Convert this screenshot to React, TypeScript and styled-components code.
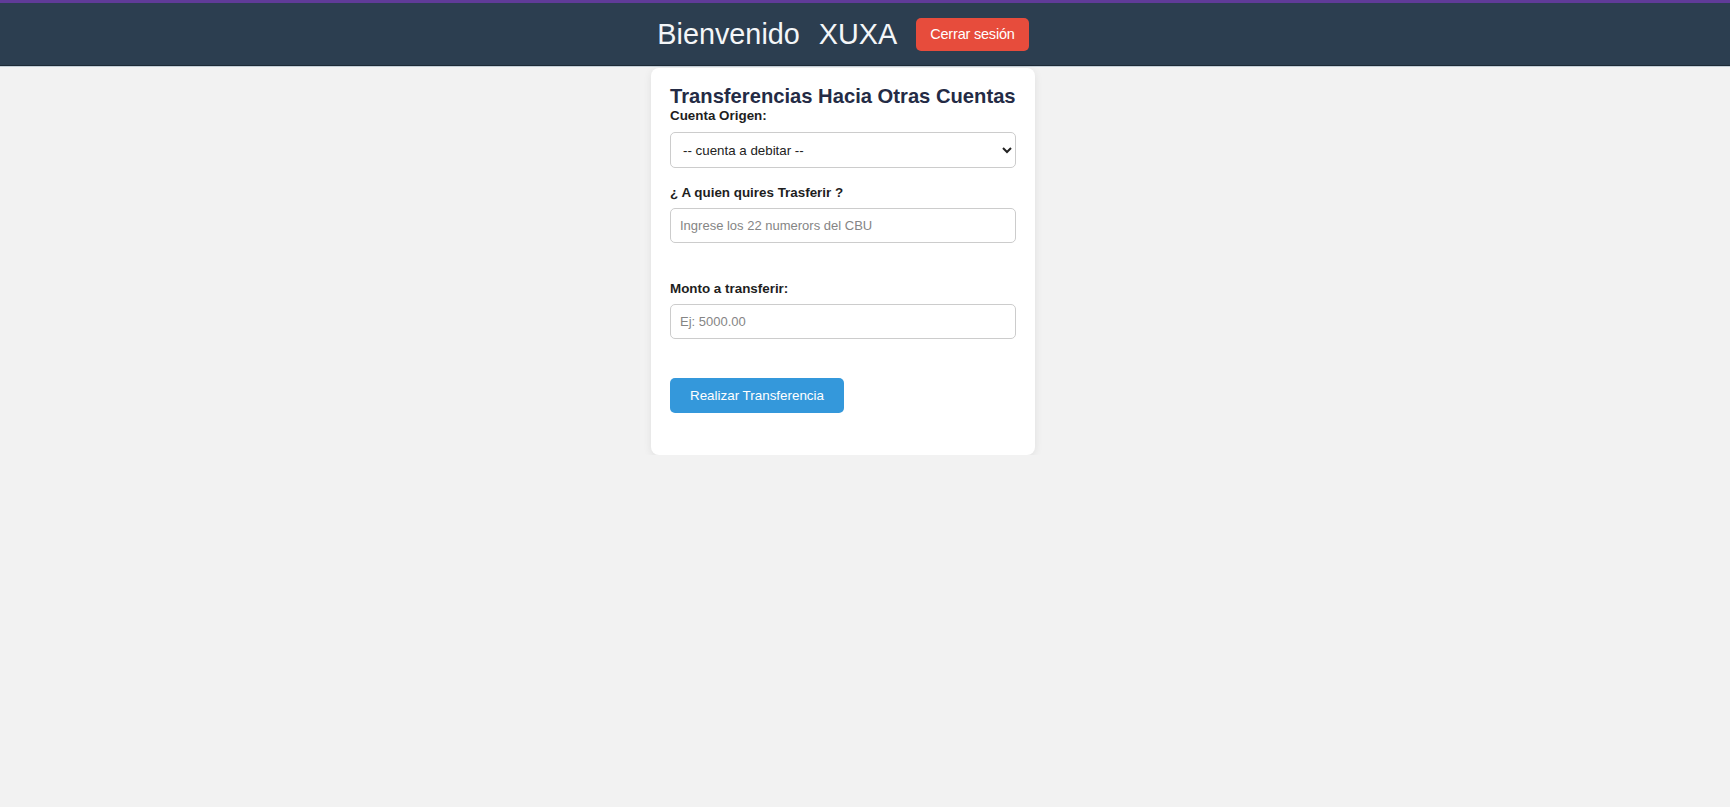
import React from "react";
import styled, { createGlobalStyle } from "styled-components";

const GlobalStyle = createGlobalStyle`
  html, body {
    margin: 0;
    padding: 0;
    background: #f2f2f2;
    font-family: "Liberation Sans", Arial, sans-serif;
  }
  * { box-sizing: border-box; }
`;

const Header = styled.header`
  height: 65px;
  border-top: 3px solid #603b98;
  background: #2c3e50;
  box-shadow: 0 1px 0 #1d2a36, 0 2px 0 #c3ced7;
  display: flex;
  align-items: center;
  justify-content: center;
  gap: 19px;
  padding-right: 44px;
`;

const Greeting = styled.span`
  color: #f4f6f8;
  font-size: 28.8px;
  line-height: 33px;
`;

const LogoutButton = styled.button`
  height: 33px;
  padding: 0 14px;
  border: none;
  border-radius: 5px;
  background: #e74c3c;
  color: #ffffff;
  font-family: "Liberation Sans", Arial, sans-serif;
  font-size: 14.5px;
  letter-spacing: -0.2px;
  cursor: pointer;
`;

const Main = styled.main`
  display: flex;
  justify-content: center;
  padding: 3px 44px 0 0;
`;

const Card = styled.section`
  width: 384px;
  background: #ffffff;
  border-radius: 8px;
  box-shadow: 0 2px 8px rgba(0, 0, 0, 0.08);
  padding: 16px 19px 42px;
`;

const Title = styled.h2`
  margin: 0;
  font-size: 20.2px;
  line-height: 24px;
  font-weight: bold;
  color: #242b45;
`;

const Field = styled.div<{ $gap: number }>`
  display: flex;
  flex-direction: column;
  margin-bottom: ${(p) => p.$gap}px;
`;

const Label = styled.label<{ $mb: number }>`
  display: block;
  font-size: 13.4px;
  line-height: 15px;
  font-weight: bold;
  color: #1e1e1e;
  margin-bottom: ${(p) => p.$mb}px;
`;

const Select = styled.select`
  width: 100%;
  height: 36px;
  padding: 0 8px;
  border: 1px solid #cccccc;
  border-radius: 5px;
  background: #ffffff;
  color: #222222;
  font-family: "Liberation Sans", Arial, sans-serif;
  font-size: 13.33px;
`;

const Input = styled.input`
  width: 100%;
  height: 35px;
  padding: 0 9px;
  border: 1px solid #cccccc;
  border-radius: 5px;
  background: #ffffff;
  color: #222222;
  font-family: "Liberation Sans", Arial, sans-serif;
  font-size: 13px;
  &::placeholder {
    color: #858585;
  }
`;

const SubmitButton = styled.button`
  height: 35px;
  padding: 0 20px;
  border: none;
  border-radius: 5px;
  background: #3498db;
  color: #ffffff;
  font-family: "Liberation Sans", Arial, sans-serif;
  font-size: 13.4px;
  cursor: pointer;
`;

export default function App() {
  return (
    <>
      <GlobalStyle />
      <Header>
        <Greeting>Bienvenido</Greeting>
        <Greeting>XUXA</Greeting>
        <LogoutButton>Cerrar sesión</LogoutButton>
      </Header>
      <Main>
        <Card>
          <Title>Transferencias Hacia Otras Cuentas</Title>
          <Field $gap={17}>
            <Label $mb={9} htmlFor="origen">Cuenta Origen:</Label>
            <Select id="origen" defaultValue="">
              <option value="">-- cuenta a debitar --</option>
            </Select>
          </Field>
          <Field $gap={38}>
            <Label $mb={8} htmlFor="cbu">¿ A quien quires Trasferir ?</Label>
            <Input id="cbu" placeholder="Ingrese los 22 numerors del CBU" />
          </Field>
          <Field $gap={39}>
            <Label $mb={8} htmlFor="monto">Monto a transferir:</Label>
            <Input id="monto" placeholder="Ej: 5000.00" />
          </Field>
          <SubmitButton>Realizar Transferencia</SubmitButton>
        </Card>
      </Main>
    </>
  );
}
